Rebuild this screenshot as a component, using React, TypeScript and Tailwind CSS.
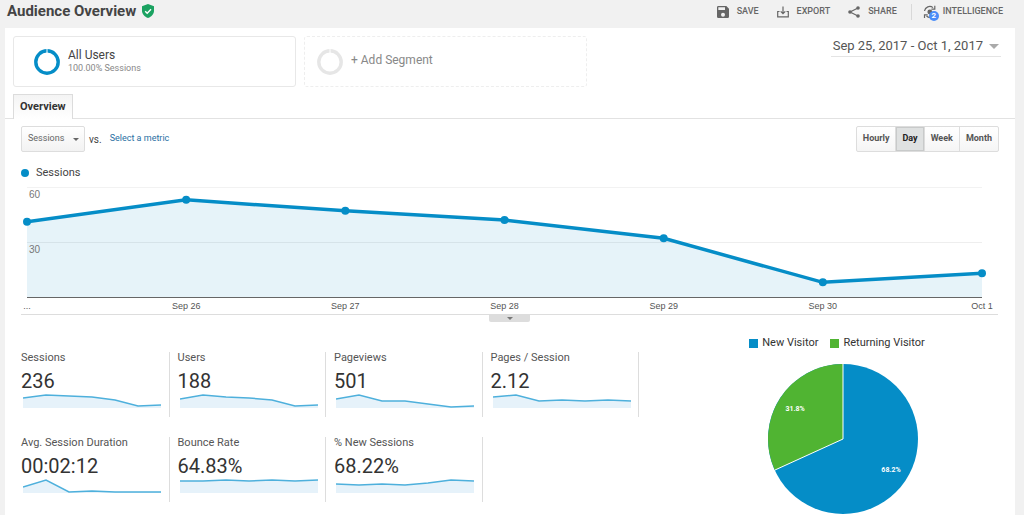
import React from "react";

const DAYS = ["...", "Sep 26", "Sep 27", "Sep 28", "Sep 29", "Sep 30", "Oct 1"];
const SESSIONS = [41, 53, 47, 42, 32, 8, 13];

interface Metric {
  name: string;
  value: string;
  trend: number[];
}

// Trend values are heights in the 14 unit tall sparkline
const METRICS: Metric[] = [
  { name: "Sessions", value: "236", trend: [10, 13, 12, 11, 8, 2, 3] },
  { name: "Users", value: "188", trend: [9, 13, 11, 10, 8, 2, 3] },
  { name: "Pageviews", value: "501", trend: [9, 13, 7, 7, 4, 1, 2] },
  { name: "Pages / Session", value: "2.12", trend: [11, 13, 7, 8, 7, 8, 7] },
  {
    name: "Avg. Session Duration",
    value: "00:02:12",
    trend: [6, 13, 1, 2, 1, 1, 1],
  },
  { name: "Bounce Rate", value: "64.83%", trend: [12, 12, 13, 12, 13, 12, 13] },
  { name: "% New Sessions", value: "68.22%", trend: [9, 8, 9, 8, 10, 13, 12] },
];

const RANGES = ["Hourly", "Day", "Week", "Month"];

const ShieldIcon = () => (
  <svg viewBox="0 0 12 14" className="h-3.5 w-3" aria-hidden="true">
    <path d="M6 0l6 2.2v4.6c0 3.2-2.4 6-6 7.2-3.6-1.2-6-4-6-7.2V2.2z" fill="#1ba261" />
    <path d="M3.2 7.2l2 2 3.8-4" fill="none" stroke="#fff" strokeWidth="1.4" />
  </svg>
);

const SaveIcon = () => (
  <svg viewBox="3 3 18 18" className="h-3 w-3" fill="currentColor" aria-hidden="true">
    <path d="M17 3H5a2 2 0 0 0-2 2v14a2 2 0 0 0 2 2h14a2 2 0 0 0 2-2V7l-4-4zm-5 16a3 3 0 1 1 0-6 3 3 0 0 1 0 6zm3-10H5V5h10v4z" />
  </svg>
);

const ExportIcon = () => (
  <svg
    viewBox="0 0 12 12"
    className="h-3 w-3"
    fill="none"
    stroke="currentColor"
    strokeWidth="1.2"
    aria-hidden="true"
  >
    <path d="M2.5 5.5H.7v5.3h10.6V5.5H9.500M6 .5v7M3.700 5.300L6 7.600l2.300-2.300" />
  </svg>
);

const ShareIcon = () => (
  <svg viewBox="0 0 12 12" className="h-3 w-3" fill="currentColor" aria-hidden="true">
    <path d="M10 2L2 6l8 4" fill="none" stroke="currentColor" strokeWidth="1.2" />
    <circle cx="10" cy="2" r="1.800" />
    <circle cx="2" cy="6" r="1.800" />
    <circle cx="10" cy="10" r="1.800" />
  </svg>
);

const IntelligenceIcon = () => (
  <svg
    viewBox="0 0 14 14"
    className="h-3.5 w-3.5"
    fill="none"
    stroke="currentColor"
    strokeWidth="1.2"
    aria-hidden="true"
  >
    <path d="M1.500 6A5.300 5.300 0 0 1 10 2.600M12.200 8A5.300 5.300 0 0 1 3.500 11" />
    <path d="M11.800.8v3.400H8.400M1.500 13V9.800h3.200" />
    <circle cx="6.800" cy="7" r="2.400" fill="currentColor" stroke="none" />
  </svg>
);

const Ring = ({ color }: { color: string }) => (
  <svg viewBox="0 0 26 26" className="h-[26px] w-[26px] shrink-0" aria-hidden="true">
    <circle cx="13" cy="13" r="11.200" fill="none" stroke={color} strokeWidth="3.400" />
    <path d="M13 0v4" stroke="#fff" strokeWidth="1" />
  </svg>
);

const Caret = ({ className }: { className: string }) => (
  <svg viewBox="0 0 8 4" className={className} fill="currentColor" aria-hidden="true">
    <path d="M0 0h8L4 4z" />
  </svg>
);

const Toolbar = () => (
  <div className="flex items-center text-[9px] font-medium text-[#666]">
    <button className="flex items-center gap-2">
      <SaveIcon />
      SAVE
    </button>
    <button className="ml-[18px] flex items-center gap-2">
      <ExportIcon />
      EXPORT
    </button>
    <button className="ml-[18px] flex items-center gap-2">
      <ShareIcon />
      SHARE
    </button>
    <div className="ml-3.5 h-4 w-px bg-[#d8d8d8]" />
    <button className="ml-[11px] flex items-center gap-1.5">
      <span className="relative">
        <IntelligenceIcon />
        <span className="absolute -right-0.5 top-1.5 flex h-2.5 w-2.5 items-center justify-center rounded-full bg-[#4a8df8] text-[8px] font-bold text-white">
          2
        </span>
      </span>
      INTELLIGENCE
    </button>
  </div>
);

const SessionsChart = () => {
  const y = (value: number) => 110 - (value * 110) / 60;
  const x = (index: number) => (index * 100) / 6;
  const points = SESSIONS.map((value, i) => `${x(i)},${y(value)}`).join(" ");

  return (
    <div className="ml-[22px] mr-[33px]">
      <svg
        className="block h-[127px] w-full overflow-visible"
        role="img"
        aria-label="Sessions by day"
      >
        <line x1="0" x2="100%" y1="0.5" y2="0.5" stroke="#f2f2f2" />
        <line x1="0" x2="100%" y1="55.5" y2="55.5" stroke="#eee" />
        <svg width="100%" height="110" viewBox="0 0 100 110" preserveAspectRatio="none">
          <polygon points={`0,110 ${points} 100,110`} fill="#058dc7" fillOpacity="0.1" />
          <polyline
            points={points}
            fill="none"
            stroke="#058dc7"
            strokeWidth="3.5"
            vectorEffect="non-scaling-stroke"
          />
        </svg>
        <line x1="0" x2="100%" y1="110.5" y2="110.5" stroke="#666" />
        {SESSIONS.map((value, i) => (
          <circle key={i} cx={`${x(i)}%`} cy={y(value)} r="4" fill="#058dc7" />
        ))}
        <g fill="#777" className="font-['Liberation_Sans',sans-serif] text-[10px]">
          <text x="2" y="11">60</text>
          <text x="2" y="66">30</text>
        </g>
        <g
          fill="#555"
          className="font-['Liberation_Sans',sans-serif] text-[9px]"
          textAnchor="middle"
        >
          {DAYS.map((day, i) => (
            <text key={day} x={`${x(i)}%`} y="122">
              {day}
            </text>
          ))}
        </g>
      </svg>
    </div>
  );
};

const MetricCard = ({ name, value, trend }: Metric) => {
  const points = trend.map((v, i) => `${i},${14 - v}`).join(" ");

  return (
    <button className="flex h-[65px] flex-col items-start border-r border-[#ddd] text-left">
      <span className="text-[11px] leading-3 text-[#555]">{name}</span>
      <span className="mt-1.5 text-[20px] leading-[22px] text-[#333]">{value}</span>
      <svg
        className="ml-0.5 mt-0.5 h-3.5 w-[138px]"
        viewBox="0 0 6 14"
        preserveAspectRatio="none"
        aria-hidden="true"
      >
        <polygon points={`0,14 ${points} 6,14`} fill="#e6f2fa" />
        <polyline
          points={points}
          fill="none"
          stroke="#4eb0dc"
          strokeWidth="1.5"
          vectorEffect="non-scaling-stroke"
        />
      </svg>
    </button>
  );
};

const VisitorPie = () => (
  <div className="flex flex-col items-center">
    <div className="flex gap-3 text-[11px] leading-3 text-[#333]">
      <span className="flex items-center gap-1">
        <span className="h-[9px] w-[9px] bg-[#058dc7]" />
        New Visitor
      </span>
      <span className="flex items-center gap-1">
        <span className="h-[9px] w-[9px] bg-[#50b432]" />
        Returning Visitor
      </span>
    </div>
    <svg
      viewBox="-75 -75 150 150"
      className="ml-3 mt-[15px] h-[150px] w-[150px]"
      role="img"
      aria-label="New and returning visitors"
    >
      <circle r="75" fill="#058dc7" />
      <path d="M0 0L-68.200 31.100A75 75 0 0 1 0-75z" fill="#50b432" />
      <path d="M-68.200 31.100L0 0V-75" fill="none" stroke="#fff" />
      <g fill="#fff" fontSize="7" fontWeight="700" textAnchor="middle">
        <text x="-48" y="-28">31.8%</text>
        <text x="48" y="33">68.2%</text>
      </g>
    </svg>
  </div>
);

export default function App() {
  return (
    <div className="min-h-screen bg-[#f1f1f1] pl-[5px] pr-[9px] font-[Roboto,'Liberation_Sans',sans-serif] text-[#444]">
      <header className="flex h-7 items-center justify-between pb-1 pl-0.5 pr-3">
        <h1 className="flex items-center gap-1.5 pb-0.5 text-[15px] font-bold">
          Audience Overview
          <ShieldIcon />
        </h1>
        <Toolbar />
      </header>

      <main className="min-h-[487px] bg-white">
        <section className="flex items-start gap-2 pl-2 pr-3.5 pt-2">
          <button className="flex h-[51px] w-[283px] items-center gap-2 rounded-[3px] border border-[#e8e8e8] pl-5 text-left">
            <Ring color="#058dc7" />
            <span className="pb-0.5">
              <span className="block text-[12px] leading-[14px] text-[#444]">All Users</span>
              <span className="block text-[9px] leading-3 text-[#888]">100.00% Sessions</span>
            </span>
          </button>
          <button className="flex h-[51px] w-[283px] items-center gap-2 rounded-[3px] border border-dashed border-[#eee] pl-3 text-left text-[12px] text-[#888]">
            <Ring color="#e6e6e6" />
            <span className="pb-1">+ Add Segment</span>
          </button>
          <button className="ml-auto flex h-[21px] items-center gap-1.5 border-b border-[#e4e4e4] px-0.5 text-[13px] text-[#555]">
            Sep 25, 2017 - Oct 1, 2017
            <Caret className="h-[5px] w-2.5 text-[#aaa]" />
          </button>
        </section>

        <nav className="mt-[7px] flex border-b border-[#e2e2e2] pl-2">
          <a
            href="#overview"
            className="-mb-px flex h-[25px] items-center border border-b-0 border-[#dcdcdc] bg-gradient-to-b from-[#f4f4f4] to-white px-1.5 text-[11px] font-bold text-[#333]"
          >
            Overview
          </a>
        </nav>

        <section className="flex items-center pl-4 pr-4 pt-[7px]">
          <div className="relative">
            <select
              aria-label="Metric"
              className="block h-[26px] w-16 appearance-none rounded-[2px] border border-[#ddd] bg-gradient-to-b from-white to-[#f2f2f2] px-1.5 text-[9px] text-[#666]"
            >
              <option>Sessions</option>
            </select>
            <Caret className="pointer-events-none absolute right-1.5 top-3 h-[3px] w-1.5 text-[#666]" />
          </div>
          <span className="ml-1 text-[10px]">vs.</span>
          <a href="#metric" className="ml-2 text-[9px] text-[#2a6fa3]">
            Select a metric
          </a>
          <div className="ml-auto flex h-[26px] divide-x divide-[#ddd] rounded-[2px] border border-[#ddd] bg-gradient-to-b from-white to-[#f5f5f5] text-[9px] font-bold">
            {RANGES.map((range) => (
              <button
                key={range}
                aria-pressed={range === "Day"}
                className={
                  range === "Day"
                    ? "bg-[#dfe1e1] px-1.5 text-[#222] inset-ring inset-ring-[#c8caca]"
                    : "px-1.5 text-[#555]"
                }
              >
                {range}
              </button>
            ))}
          </div>
        </section>

        <div className="flex h-[35px] items-center gap-[7px] pl-4 pt-1.5 text-[11px] leading-3">
          <span className="h-2 w-2 rounded-full bg-[#058dc7]" />
          Sessions
        </div>
        <SessionsChart />
        <div className="ml-4 mr-[17px] flex justify-center border-t border-[#ddd]">
          <button
            aria-label="Expand chart"
            className="flex h-[7px] w-[41px] justify-center rounded-b-[2px] bg-[#ddd] pt-0.5 text-[#777]"
          >
            <Caret className="h-[3px] w-1.5" />
          </button>
        </div>

        <section className="flex items-start pl-4 pt-[30px]">
          <div className="grid w-[618px] grid-cols-4 gap-x-2 gap-y-5">
            {METRICS.map((metric) => (
              <MetricCard key={metric.name} {...metric} />
            ))}
          </div>
          <div className="-mt-[15px] flex flex-1 justify-center pl-5">
            <VisitorPie />
          </div>
        </section>
      </main>
    </div>
  );
}
